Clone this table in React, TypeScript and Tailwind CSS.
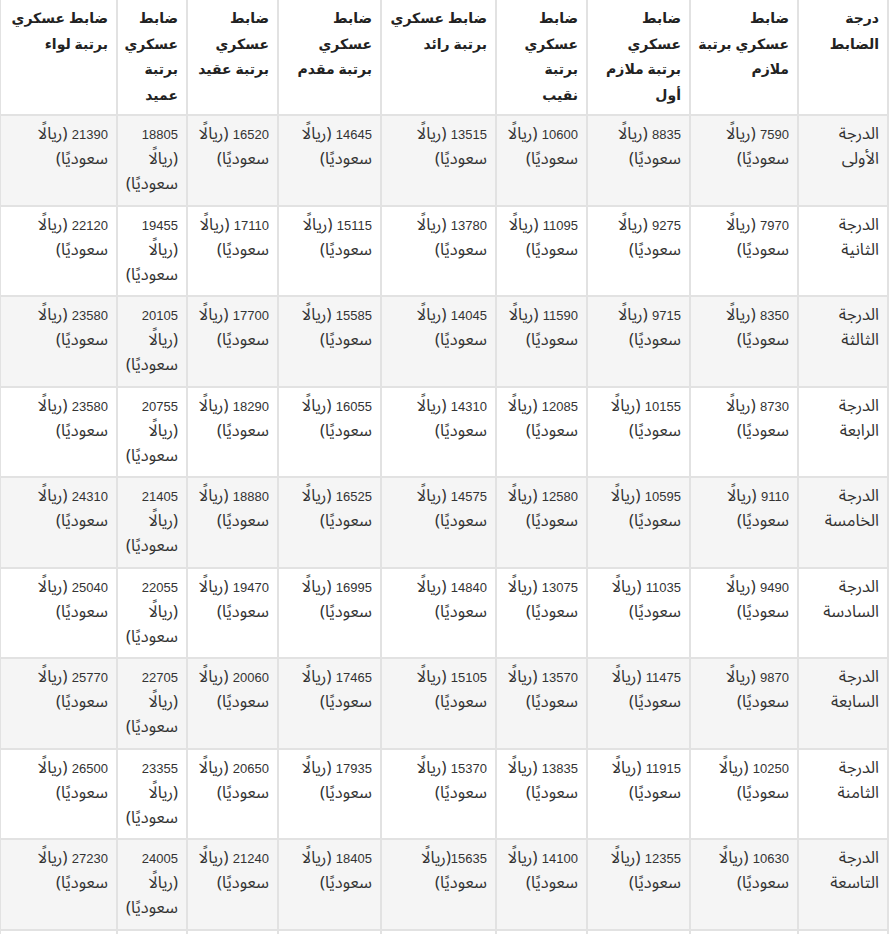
import React from "react";

const headers: string[][] = [
  ["درجة", "الضابط"],
  ["ضابط", "عسكري برتبة", "ملازم"],
  ["ضابط", "عسكري", "برتبة ملازم", "أول"],
  ["ضابط", "عسكري", "برتبة", "نقيب"],
  ["ضابط عسكري", "برتبة رائد"],
  ["ضابط", "عسكري", "برتبة مقدم"],
  ["ضابط", "عسكري", "برتبة عقيد"],
  ["ضابط", "عسكري", "برتبة", "عميد"],
  ["ضابط عسكري", "برتبة لواء"],
];

const widths = [
  "w-[90px]",
  "w-[108px]",
  "w-[103px]",
  "w-[91px]",
  "w-[115px]",
  "w-[103px]",
  "w-[91px]",
  "w-[70px]",
  "w-[117px]",
];

const rows: { name: [string, string]; vals: string[] }[] = [
  { name: ["الدرجة", "الأولى"], vals: ["7590", "8835", "10600", "13515", "14645", "16520", "18805", "21390"] },
  { name: ["الدرجة", "الثانية"], vals: ["7970", "9275", "11095", "13780", "15115", "17110", "19455", "22120"] },
  { name: ["الدرجة", "الثالثة"], vals: ["8350", "9715", "11590", "14045", "15585", "17700", "20105", "23580"] },
  { name: ["الدرجة", "الرابعة"], vals: ["8730", "10155", "12085", "14310", "16055", "18290", "20755", "23580"] },
  { name: ["الدرجة", "الخامسة"], vals: ["9110", "10595", "12580", "14575", "16525", "18880", "21405", "24310"] },
  { name: ["الدرجة", "السادسة"], vals: ["9490", "11035", "13075", "14840", "16995", "19470", "22055", "25040"] },
  { name: ["الدرجة", "السابعة"], vals: ["9870", "11475", "13570", "15105", "17465", "20060", "22705", "25770"] },
  { name: ["الدرجة", "الثامنة"], vals: ["10250", "11915", "13835", "15370", "17935", "20650", "23355", "26500"] },
  { name: ["الدرجة", "التاسعة"], vals: ["10630", "12355", "14100", "15635", "18405", "21240", "24005", "27230"] },
  { name: ["الدرجة", "العاشرة"], vals: ["11010", "12795", "14595", "15900", "18875", "21830", "24655", "27960"] },
];

const cell =
  "border-2 border-[#e2e2e2] px-2 pt-[5px] pb-[8.5px] text-right align-top text-[#333] whitespace-nowrap";

const line = "h-[25px] leading-[25px] overflow-visible";
const arabic = "font-['Noto_Sans_Arabic','DejaVu_Sans',sans-serif] text-[16.5px]";
const digits = "font-['Liberation_Sans',sans-serif] text-[13px]";

function Money({ v, narrow, noSpace }: { v: string; narrow: boolean; noSpace: boolean }) {
  if (narrow) {
    return (
      <>
        <div className={line}>
          <span className={digits}>{v}</span>
        </div>
        <div className={line}>
          <span className={arabic}>(ريالًا</span>
        </div>
        <div className={line}>
          <span className={arabic}>سعوديًا)</span>
        </div>
      </>
    );
  }
  return (
    <>
      <div className={line}>
        <span className={digits}>{v}</span>
        {noSpace ? "" : " "}
        <span className={arabic}>(ريالًا</span>
      </div>
      <div className={line}>
        <span className={arabic}>سعوديًا)</span>
      </div>
    </>
  );
}

export default function App() {
  return (
    <div
      dir="rtl"
      className="w-[892px] h-[934px] overflow-hidden bg-white pr-[3px]"
      style={{ fontFamily: '"Liberation Sans", "DejaVu Sans", sans-serif' }}
    >
      <table className="table-fixed border-collapse w-[888px] -mt-[2px]">
        <colgroup>
          {widths.map((w, i) => (
            <col key={i} className={w} />
          ))}
        </colgroup>
        <thead>
          <tr>
            {headers.map((h, i) => (
              <th
                key={i}
                className="border-2 border-[#e2e2e2] px-2 pt-[6px] pb-[6px] text-right align-top font-bold text-[14px] text-[#222] whitespace-nowrap"
              >
                {h.map((ln, li) => (
                  <div key={li} className="h-[25.5px] leading-[25.5px]">
                    {ln}
                  </div>
                ))}
              </th>
            ))}
          </tr>
        </thead>
        <tbody>
          {rows.map((r, ri) => (
            <tr key={ri} className={ri % 2 === 0 ? "bg-[#f5f5f5]" : "bg-white"}>
              <td className={cell}>
                <div className={line}>
                  <span className={arabic}>{r.name[0]}</span>
                </div>
                <div className={line}>
                  <span className={arabic}>{r.name[1]}</span>
                </div>
              </td>
              {r.vals.map((v, vi) => (
                <td key={vi} className={cell}>
                  <Money v={v} narrow={vi === 6} noSpace={ri === 8 && vi === 3} />
                </td>
              ))}
            </tr>
          ))}
        </tbody>
      </table>
    </div>
  );
}
